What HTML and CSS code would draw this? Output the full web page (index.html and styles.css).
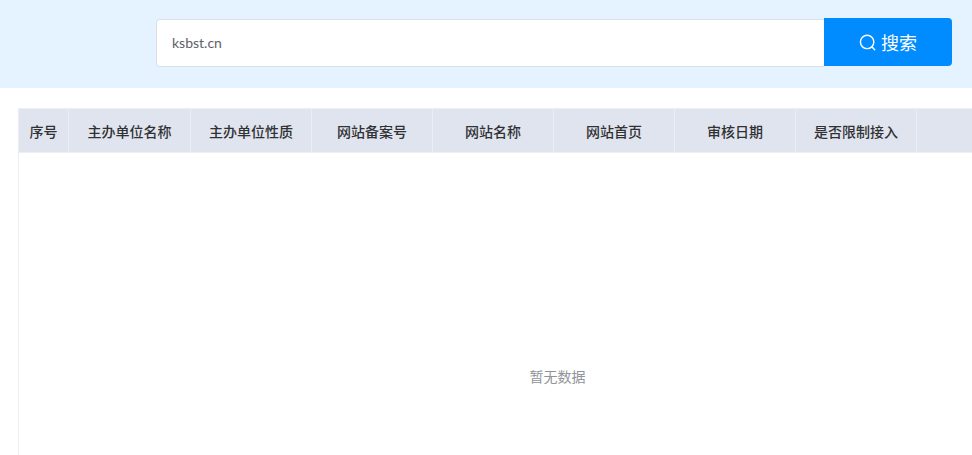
FILE: index.html
```html
<!DOCTYPE html>
<html lang="zh-CN">
<head>
<meta charset="utf-8">
<title>备案查询</title>
<link rel="stylesheet" href="styles.css">
</head>
<body>
<header class="search-band">
  <form class="search">
    <input class="search-input" type="text" value="ksbst.cn">
    <button class="search-btn" type="button">
      <svg class="search-icon" viewBox="0 0 18 18" width="17" height="17" aria-hidden="true">
        <circle cx="8.6" cy="8.4" r="7.1" fill="none" stroke="currentColor" stroke-width="1.5"/>
        <path d="M13.6 13.5 L16.6 16.6" fill="none" stroke="currentColor" stroke-width="1.6" stroke-linecap="round"/>
      </svg>
      <span>搜索</span>
    </button>
  </form>
</header>
<main class="table">
  <div class="thead">
    <div class="th th-index">序号</div>
    <div class="th th-first">主办单位名称</div>
    <div class="th">主办单位性质</div>
    <div class="th">网站备案号</div>
    <div class="th">网站名称</div>
    <div class="th">网站首页</div>
    <div class="th">审核日期</div>
    <div class="th">是否限制接入</div>
    <div class="th th-fill"></div>
  </div>
  <div class="tbody"><span class="empty">暂无数据</span></div>
</main>
</body>
</html>
```
FILE: styles.css
```css
* { box-sizing: border-box; }
html, body { margin: 0; padding: 0; height: 455px; overflow: hidden; background: #fff; }
body { font-family: "Lato", "Noto Sans CJK SC", sans-serif; font-size: 14px; }

.search-band {
  height: 88px;
  background: #e5f2ff;
  padding: 18px 20px 0 156px;
}
.search { display: flex; height: 48px; }
.search-input {
  flex: 1;
  min-width: 0;
  height: 48px;
  margin-top: 1px;
  padding: 0 15px 2px;
  border: 1px solid #dcdfe6;
  border-right: 0;
  border-radius: 4px 0 0 4px;
  background: #fff;
  color: #606266;
  font: 14px "Lato", "Noto Sans CJK SC", sans-serif;
  outline: none;
}
.search-btn {
  width: 128px;
  flex: none;
  display: flex;
  align-items: center;
  justify-content: center;
  gap: 5px;
  border: 0;
  border-radius: 0 4px 4px 0;
  background: #008cff;
  color: #fff;
  font: 18px "Noto Sans CJK SC", sans-serif;
  padding: 0;
}

.table {
  margin: 20px 0 0 18px;
  height: 347px;
  border-left: 1px solid #ebeef5;
  display: flex;
  flex-direction: column;
}
.thead {
  display: flex;
  height: 45px;
  flex: none;
  background: #e0e4ef;
  border-top: 1px solid #ebeef5;
  border-bottom: 1px solid #ebeef5;
}
.th {
  width: 121px;
  flex: none;
  display: flex;
  align-items: center;
  justify-content: center;
  border-right: 1px solid #ebeef5;
  color: #303133;
  font-family: "Noto Sans CJK SC", sans-serif;
  font-weight: 500;
  font-size: 14px;
}
.th-index { width: 50px; }
.th-first { width: 122px; }
.th-fill { flex: 1; border-right: 0; }
.tbody {
  flex: 1;
  display: flex;
  align-items: center;
  justify-content: center;
  padding-top: 144px;
  padding-left: 124px;
}
.empty { color: #909399; font-family: "Noto Sans CJK SC", sans-serif; font-size: 14px; }
```
